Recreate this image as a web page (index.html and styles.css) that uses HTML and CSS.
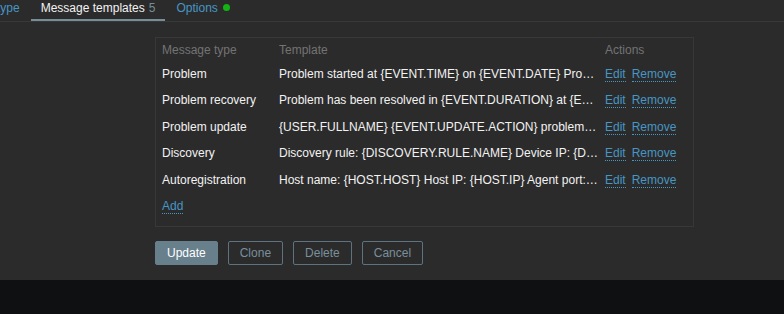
FILE: index.html
```html
<!DOCTYPE html>
<html lang="en">
<head>
    <meta charset="UTF-8">
    <meta name="viewport" content="width=device-width, initial-scale=1.0">
    <title>Media type - Message templates</title>
    <link rel="stylesheet" href="styles.css">
</head>
<body>
    <div class="page">
        <ul class="tabs">
            <li class="tab"><a href="#">Media type</a></li>
            <li class="tab active"><span>Message templates</span><span class="count">5</span></li>
            <li class="tab"><a href="#">Options</a><span class="dot"></span></li>
        </ul>
        <div class="form">
            <div class="templates">
                <table>
                    <colgroup>
                        <col class="col-type">
                        <col class="col-template">
                        <col>
                    </colgroup>
                    <thead>
                        <tr>
                            <th>Message type</th>
                            <th>Template</th>
                            <th>Actions</th>
                        </tr>
                    </thead>
                    <tbody>
                        <tr>
                            <td>Problem</td>
                            <td class="template">Problem started at {EVENT.TIME} on {EVENT.DATE} Problem name: {EVENT.NAME} Host: {HOST.NAME} Severity: {EVENT.SEVERITY}</td>
                            <td class="actions"><a href="#">Edit</a><a href="#">Remove</a></td>
                        </tr>
                        <tr>
                            <td>Problem recovery</td>
                            <td class="template">Problem has been resolved in {EVENT.DURATION} at {EVENT.RECOVERY.TIME} on {EVENT.RECOVERY.DATE}</td>
                            <td class="actions"><a href="#">Edit</a><a href="#">Remove</a></td>
                        </tr>
                        <tr>
                            <td>Problem update</td>
                            <td class="template">{USER.FULLNAME} {EVENT.UPDATE.ACTION} problem at {EVENT.UPDATE.DATE} {EVENT.UPDATE.TIME}.</td>
                            <td class="actions"><a href="#">Edit</a><a href="#">Remove</a></td>
                        </tr>
                        <tr>
                            <td>Discovery</td>
                            <td class="template">Discovery rule: {DISCOVERY.RULE.NAME} Device IP: {DISCOVERY.DEVICE.IPADDRESS}</td>
                            <td class="actions"><a href="#">Edit</a><a href="#">Remove</a></td>
                        </tr>
                        <tr>
                            <td>Autoregistration</td>
                            <td class="template">Host name: {HOST.HOST} Host IP: {HOST.IP} Agent port: {HOST.PORT}</td>
                            <td class="actions"><a href="#">Edit</a><a href="#">Remove</a></td>
                        </tr>
                        <tr>
                            <td colspan="3"><a href="#">Add</a></td>
                        </tr>
                    </tbody>
                </table>
            </div>
            <div class="buttons">
                <button class="btn">Update</button>
                <button class="btn btn-alt">Clone</button>
                <button class="btn btn-alt">Delete</button>
                <button class="btn btn-alt">Cancel</button>
            </div>
        </div>
    </div>
</body>
</html>
```

FILE: styles.css
```css
body {
    margin: 0;
    height: 314px;
    overflow: hidden;
    background-color: #0e1012;
    font-family: "Liberation Sans", Arial, sans-serif;
    font-size: 12px;
    color: #f2f2f2;
}
a {
    color: #4796c4;
    text-decoration: none;
    border-bottom: 1px dotted #4796c4;
}
.page {
    background-color: #2b2b2b;
    height: 280px;
    overflow: hidden;
}
.tabs {
    list-style: none;
    margin: 0 0 0 -49px;
    padding: 0;
    display: flex;
    gap: 1px;
    height: 21px;
    border-bottom: 1px solid #383838;
}
.tab {
    padding: 1px 10px 0;
    line-height: 14px;
    height: 18px;
    display: flex;
    align-items: flex-start;
}
.tab a {
    border-bottom: none;
}
.tab.active {
    border-bottom: 2px solid #768d99;
}
.count {
    color: #768d99;
    margin-left: 4px;
}
.dot {
    width: 7px;
    height: 7px;
    border-radius: 50%;
    background-color: #12b312;
    margin: 3px 0 0 5px;
}
.form {
    padding: 15px 0 15px 155px;
}
.templates {
    width: 537px;
    border: 1px solid #383838;
    padding-bottom: 6px;
}
table {
    width: 100%;
    border-collapse: collapse;
    table-layout: fixed;
}
.col-type {
    width: 117px;
}
.col-template {
    width: 326px;
}
th {
    text-align: left;
    font-weight: normal;
    color: #737373;
    padding: 5px 6px 3px;
    line-height: 14.5px;
}
td {
    padding: 6px 6px;
    line-height: 14.5px;
    white-space: nowrap;
}
.template {
    overflow: hidden;
    text-overflow: ellipsis;
    padding-right: 0;
}
.actions a + a {
    margin-left: 6px;
}
.buttons {
    display: flex;
    gap: 10px;
    margin-top: 14px;
}
.btn {
    height: 24px;
    padding: 0 11px;
    font-family: inherit;
    font-size: 12px;
    border-radius: 2px;
    border: 1px solid #687f8c;
    background-color: #687f8c;
    color: #ffffff;
}
.btn-alt {
    background-color: transparent;
    border-color: #5d7380;
    color: #7a8f9b;
}
```
